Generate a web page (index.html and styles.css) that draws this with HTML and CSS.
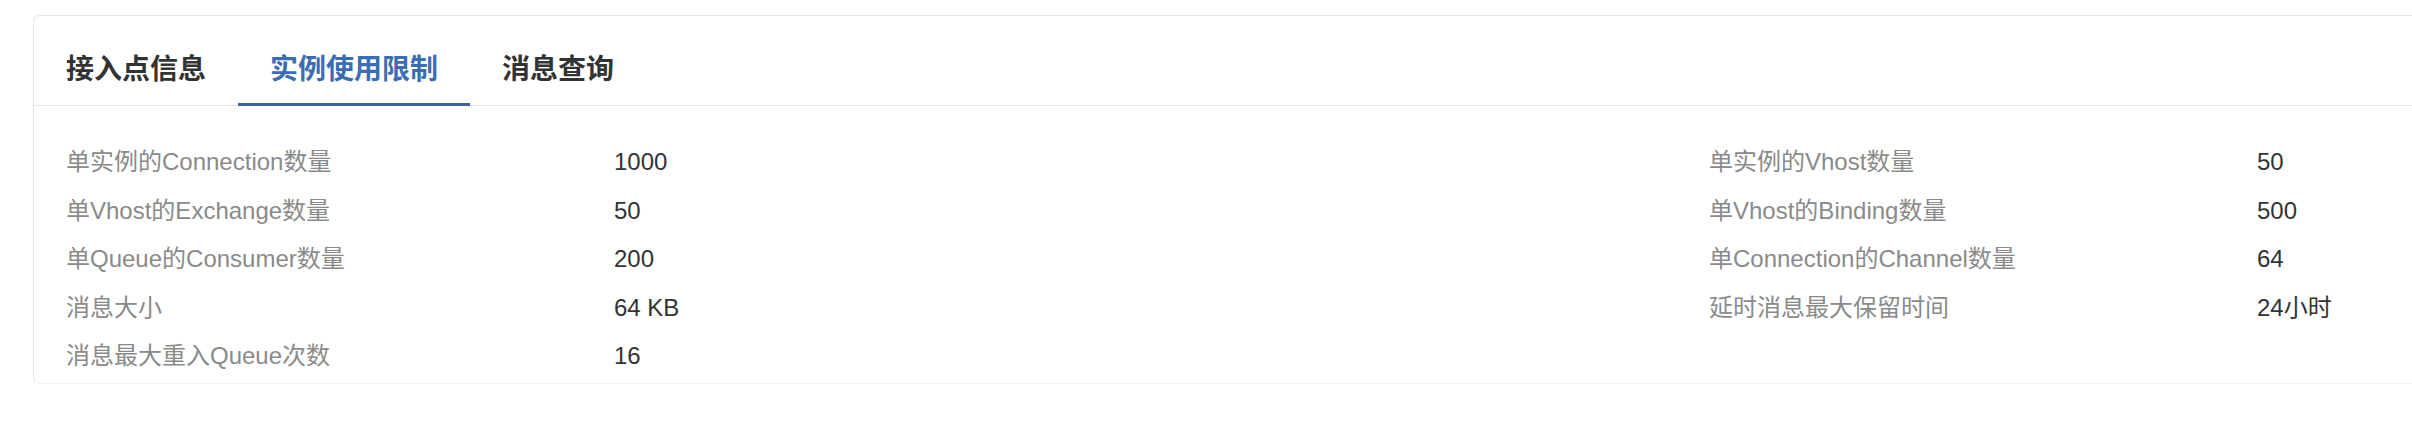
FILE: index.html
```
<!DOCTYPE html>
<html lang="zh-CN">
<head>
<meta charset="utf-8">
<title>实例使用限制</title>
<link rel="stylesheet" href="styles.css">
</head>
<body>
<div class="card">
  <div class="tabs">
    <div class="tab">接入点信息</div>
    <div class="tab active">实例使用限制</div>
    <div class="tab">消息查询</div>
  </div>
  <div class="limits">
    <div class="item"><span class="label">单实例的Connection数量</span><span class="value">1000</span></div>
    <div class="item"><span class="label">单实例的Vhost数量</span><span class="value">50</span></div>
    <div class="item"><span class="label">单Vhost的Exchange数量</span><span class="value">50</span></div>
    <div class="item"><span class="label">单Vhost的Binding数量</span><span class="value">500</span></div>
    <div class="item"><span class="label">单Queue的Consumer数量</span><span class="value">200</span></div>
    <div class="item"><span class="label">单Connection的Channel数量</span><span class="value">64</span></div>
    <div class="item"><span class="label">消息大小</span><span class="value">64 KB</span></div>
    <div class="item"><span class="label">延时消息最大保留时间</span><span class="value">24小时</span></div>
    <div class="item"><span class="label">消息最大重入Queue次数</span><span class="value">16</span></div>
  </div>
</div>
</body>
</html>
```
FILE: styles.css
```
html, body {
  margin: 0;
  padding: 0;
  background: #ffffff;
  overflow: hidden;
}
body {
  font-family: "Liberation Sans", "Noto Sans CJK SC", Arial, sans-serif;
  width: 2412px;
  height: 432px;
}
.card {
  margin: 15px 0 0 33px;
  width: 3500px;
  border: 1px solid #e6e6e6;
  border-bottom-color: #f3f3f3;
  border-radius: 7px;
  background: #fff;
}
.tabs {
  display: flex;
  height: 89px;
  border-bottom: 1px solid #e4e4e4;
}
.tab {
  padding: 40px 32px 19px;
  line-height: 28px;
  font-size: 28px;
  font-weight: bold;
  color: #333333;
  border-bottom: 3px solid transparent;
  margin-bottom: -1px;
  height: 28px;
}
.tab.active {
  color: #3a6db4;
  border-bottom-color: #3e6297;
}
.limits {
  display: grid;
  grid-template-columns: 1643px 1643px;
  grid-auto-rows: 48.5px;
  padding: 32px 0 2px 32px;
}
.item {
  display: flex;
  align-items: baseline;
  font-size: 24px;
  line-height: 48px;
}
.label {
  width: 548px;
  color: #8a8a8a;
}
.value {
  color: #333333;
}
```
